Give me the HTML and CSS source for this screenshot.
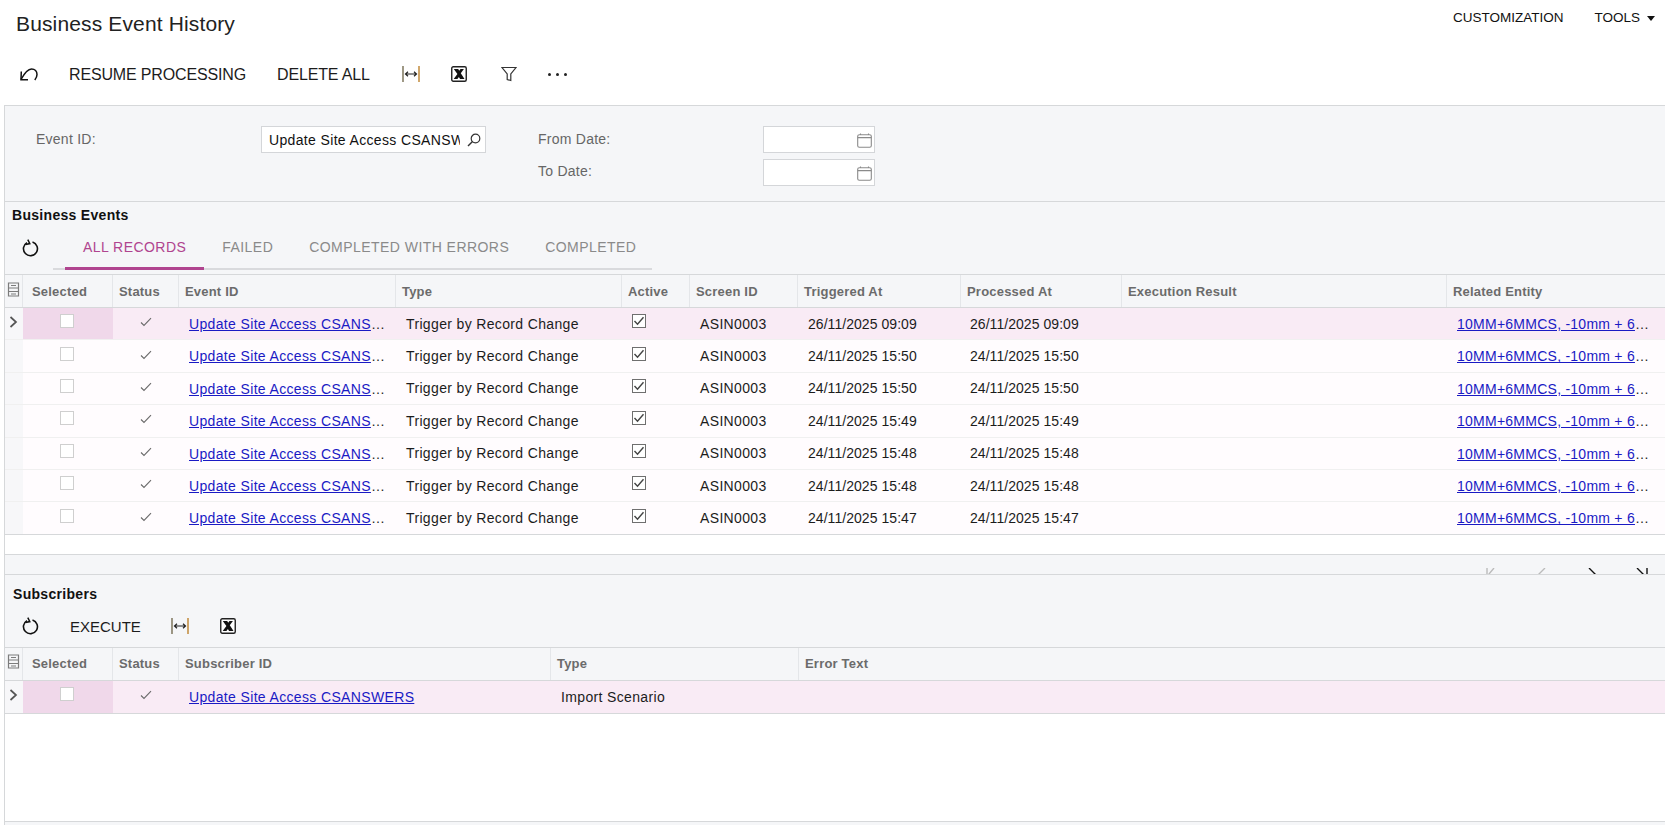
FILE: index.html
```html
<!DOCTYPE html>
<html lang="en">
<head>
<meta charset="utf-8">
<title>Business Event History</title>
<link rel="stylesheet" href="styles.css">
</head>
<body>
<svg class="defs" width="0" height="0" aria-hidden="true">
  <symbol id="i-autosize" viewBox="0 0 18 18">
    <path d="M1 1v16" stroke="#6b6244" stroke-width="1.300" fill="none"/>
    <path d="M17 1v16" stroke="#b9791c" stroke-width="1.300" fill="none"/>
    <path d="M3.500 9h11M6 6.800 3.500 9 6 11.200M12 6.800 14.500 9 12 11.200" stroke="#222" stroke-width="1.200" fill="none"/>
  </symbol>
  <symbol id="i-excel" viewBox="0 0 16 16">
    <rect x=".75" y=".75" width="14.500" height="14.500" rx="1.500" fill="#fff" stroke="#222" stroke-width="1.400"/>
    <path d="M2.800 3h4.400l1 1.800L9.500 3h3.400L9.800 7.300l3.700 5.700H9.100L7.900 10.900 6.400 13H2.700l3.700-5z" fill="#111"/>
  </symbol>
  <symbol id="i-refresh" viewBox="0 0 18 18">
    <path d="M6 3.600A7 7 0 1 0 11.500 3" stroke="#111" stroke-width="1.600" fill="none"/>
    <path d="M6.800 .6 8.800 4.600 4.500 5.500" stroke="#111" stroke-width="1.500" fill="none"/>
  </symbol>
  <symbol id="i-cal" viewBox="0 0 15 15">
    <rect x=".7" y="1.700" width="13.600" height="12.600" rx="1.600" fill="none" stroke="#8a8a8a" stroke-width="1.100"/>
    <path d="M.7 4.600h13.600M3.500.5v1.500M11.500.5v1.500" stroke="#8a8a8a" stroke-width="1.100" fill="none"/>
  </symbol>
  <symbol id="i-check" viewBox="0 0 12 10">
    <path d="M1 5.500 4 8.500 11 1.200" stroke="#6b6b6b" stroke-width="1.100" fill="none"/>
  </symbol>
  <symbol id="i-tick" viewBox="0 0 12 10">
    <path d="M1.500 5 4.500 8.200 10.500 1.200" stroke="#444" stroke-width="1.400" fill="none"/>
  </symbol>
  <symbol id="i-gridcfg" viewBox="0 0 13 15">
    <path d="M1.500 1h10v13h-10zM1.500 6h10M1.500 9.500h10M4 3.500h5M4 12h5" stroke="#7c7c7c" stroke-width="1.200" fill="none"/>
  </symbol>
  <symbol id="i-chev" viewBox="0 0 9 12">
    <path d="M1.500 1 7 6 1.500 11" stroke="#555" stroke-width="1.700" fill="none"/>
  </symbol>
</svg>

<header class="titlebar">
  <h1 class="title">Business Event History</h1>
  <nav class="topnav">
    <span>CUSTOMIZATION</span>
    <span class="tools">TOOLS<i class="caret"></i></span>
  </nav>
</header>

<div class="toolbar main-toolbar">
  <svg class="ic-undo" width="18" height="13" viewBox="0 0 18 13"><path d="M1 11.500 C4 6 7 1 11.500 1 C15 1 17 3.500 17 6.500 C17 8.500 16 10.500 14.800 12" stroke="#111" stroke-width="1.500" fill="none"/><path d="M1.300 3.500 1 11.800 8 11.800" stroke="#111" stroke-width="1.500" fill="none"/></svg>
  <span class="tb-label resume">RESUME PROCESSING</span>
  <span class="tb-label delete">DELETE ALL</span>
  <svg class="ic-auto" width="18" height="18"><use href="#i-autosize"/></svg>
  <svg class="ic-excel" width="16" height="16"><use href="#i-excel"/></svg>
  <svg class="ic-filter" width="16" height="16" viewBox="0 0 16 16"><path d="M1 1.500h14L9.800 8v6.500l-3.600-1V8z" stroke="#333" stroke-width="1.200" fill="#fff"/></svg>
  <span class="dots"><i></i><i></i><i></i></span>
</div>

<main class="panel">
  <section class="form">
    <div class="form-col first">
      <label class="f-label">Event ID:</label>
      <div class="input wide"><span class="input-text">Update Site Access CSANSWERS</span>
        <svg class="ic-search" width="14" height="14" viewBox="0 0 14 14"><circle cx="8.500" cy="5.500" r="4.300" fill="none" stroke="#333" stroke-width="1.200"/><path d="M5.500 8.500 1 13" stroke="#333" stroke-width="1.500"/></svg>
      </div>
    </div>
    <div class="form-col second">
      <div class="f-row"><label class="f-label small">From Date:</label><div class="input date"><svg width="15" height="15"><use href="#i-cal"/></svg></div></div>
      <div class="f-row"><label class="f-label small">To Date:</label><div class="input date"><svg width="15" height="15"><use href="#i-cal"/></svg></div></div>
    </div>
  </section>

  <section class="events">
    <h2 class="sec-title">Business Events</h2>
    <div class="tabs-bar">
      <svg class="ic-refresh" width="18" height="18"><use href="#i-refresh"/></svg>
      <div class="tabs">
        <span class="tab active">ALL RECORDS</span>
        <span class="tab">FAILED</span>
        <span class="tab">COMPLETED WITH ERRORS</span>
        <span class="tab">COMPLETED</span>
      </div>
    </div>
    <div class="grid ev">
      <div class="row head">
        <div class="c sel"><svg width="13" height="15"><use href="#i-gridcfg"/></svg></div><div class="c">Selected</div><div class="c">Status</div><div class="c">Event ID</div><div class="c">Type</div><div class="c">Active</div><div class="c">Screen ID</div><div class="c">Triggered At</div><div class="c">Processed At</div><div class="c">Execution Result</div><div class="c">Related Entity</div>
      </div>
      <div class="row body current">
        <div class="c sel"><svg width="9" height="12"><use href="#i-chev"/></svg></div><div class="c box hl"><i class="cb"></i></div><div class="c ctr"><svg width="12" height="10"><use href="#i-check"/></svg></div><div class="c t link"><a href="#">Update Site Access CSANSWERS</a></div><div class="c t">Trigger by Record Change</div><div class="c active-cell"><i class="cb on"><svg width="12" height="10"><use href="#i-tick"/></svg></i></div><div class="c t">ASIN0003</div><div class="c t d">26/11/2025 09:09</div><div class="c t d">26/11/2025 09:09</div><div class="c t"></div><div class="c t link rel"><a href="#">10MM+6MMCS, -10mm + 6mm Cold Store</a></div>
      </div>
      <div class="row body">
        <div class="c sel"></div><div class="c box"><i class="cb"></i></div><div class="c ctr"><svg width="12" height="10"><use href="#i-check"/></svg></div><div class="c t link"><a href="#">Update Site Access CSANSWERS</a></div><div class="c t">Trigger by Record Change</div><div class="c active-cell"><i class="cb on"><svg width="12" height="10"><use href="#i-tick"/></svg></i></div><div class="c t">ASIN0003</div><div class="c t d">24/11/2025 15:50</div><div class="c t d">24/11/2025 15:50</div><div class="c t"></div><div class="c t link rel"><a href="#">10MM+6MMCS, -10mm + 6mm Cold Store</a></div>
      </div>
      <div class="row body">
        <div class="c sel"></div><div class="c box"><i class="cb"></i></div><div class="c ctr"><svg width="12" height="10"><use href="#i-check"/></svg></div><div class="c t link"><a href="#">Update Site Access CSANSWERS</a></div><div class="c t">Trigger by Record Change</div><div class="c active-cell"><i class="cb on"><svg width="12" height="10"><use href="#i-tick"/></svg></i></div><div class="c t">ASIN0003</div><div class="c t d">24/11/2025 15:50</div><div class="c t d">24/11/2025 15:50</div><div class="c t"></div><div class="c t link rel"><a href="#">10MM+6MMCS, -10mm + 6mm Cold Store</a></div>
      </div>
      <div class="row body">
        <div class="c sel"></div><div class="c box"><i class="cb"></i></div><div class="c ctr"><svg width="12" height="10"><use href="#i-check"/></svg></div><div class="c t link"><a href="#">Update Site Access CSANSWERS</a></div><div class="c t">Trigger by Record Change</div><div class="c active-cell"><i class="cb on"><svg width="12" height="10"><use href="#i-tick"/></svg></i></div><div class="c t">ASIN0003</div><div class="c t d">24/11/2025 15:49</div><div class="c t d">24/11/2025 15:49</div><div class="c t"></div><div class="c t link rel"><a href="#">10MM+6MMCS, -10mm + 6mm Cold Store</a></div>
      </div>
      <div class="row body">
        <div class="c sel"></div><div class="c box"><i class="cb"></i></div><div class="c ctr"><svg width="12" height="10"><use href="#i-check"/></svg></div><div class="c t link"><a href="#">Update Site Access CSANSWERS</a></div><div class="c t">Trigger by Record Change</div><div class="c active-cell"><i class="cb on"><svg width="12" height="10"><use href="#i-tick"/></svg></i></div><div class="c t">ASIN0003</div><div class="c t d">24/11/2025 15:48</div><div class="c t d">24/11/2025 15:48</div><div class="c t"></div><div class="c t link rel"><a href="#">10MM+6MMCS, -10mm + 6mm Cold Store</a></div>
      </div>
      <div class="row body">
        <div class="c sel"></div><div class="c box"><i class="cb"></i></div><div class="c ctr"><svg width="12" height="10"><use href="#i-check"/></svg></div><div class="c t link"><a href="#">Update Site Access CSANSWERS</a></div><div class="c t">Trigger by Record Change</div><div class="c active-cell"><i class="cb on"><svg width="12" height="10"><use href="#i-tick"/></svg></i></div><div class="c t">ASIN0003</div><div class="c t d">24/11/2025 15:48</div><div class="c t d">24/11/2025 15:48</div><div class="c t"></div><div class="c t link rel"><a href="#">10MM+6MMCS, -10mm + 6mm Cold Store</a></div>
      </div>
      <div class="row body last">
        <div class="c sel"></div><div class="c box"><i class="cb"></i></div><div class="c ctr"><svg width="12" height="10"><use href="#i-check"/></svg></div><div class="c t link"><a href="#">Update Site Access CSANSWERS</a></div><div class="c t">Trigger by Record Change</div><div class="c active-cell"><i class="cb on"><svg width="12" height="10"><use href="#i-tick"/></svg></i></div><div class="c t">ASIN0003</div><div class="c t d">24/11/2025 15:47</div><div class="c t d">24/11/2025 15:47</div><div class="c t"></div><div class="c t link rel"><a href="#">10MM+6MMCS, -10mm + 6mm Cold Store</a></div>
      </div>
    </div>
    <div class="grid-spacer"></div>
    <div class="pager">
      <svg class="pg first" width="12" height="12" viewBox="0 0 12 12"><path d="M1 0v12M8 0 3 6l5 6" stroke="#bbb" stroke-width="1.400" fill="none"/></svg>
      <svg class="pg prev" width="8" height="12" viewBox="0 0 8 12"><path d="M7 0 1 6l6 6" stroke="#bbb" stroke-width="1.400" fill="none"/></svg>
      <svg class="pg next" width="8" height="12" viewBox="0 0 8 12"><path d="M1 0l6 6-6 6" stroke="#111" stroke-width="1.400" fill="none"/></svg>
      <svg class="pg end" width="12" height="12" viewBox="0 0 12 12"><path d="M11 0v12M1 0l6 6-6 6" stroke="#111" stroke-width="1.400" fill="none"/></svg>
    </div>
  </section>

  <section class="subs">
    <h2 class="sec-title">Subscribers</h2>
    <div class="toolbar sub-toolbar">
      <svg class="ic-refresh" width="18" height="18"><use href="#i-refresh"/></svg>
      <span class="tb-label execute">EXECUTE</span>
      <svg class="ic-auto2" width="18" height="18"><use href="#i-autosize"/></svg>
      <svg class="ic-excel2" width="16" height="16"><use href="#i-excel"/></svg>
    </div>
    <div class="grid sb">
      <div class="row head">
        <div class="c sel"><svg width="13" height="15"><use href="#i-gridcfg"/></svg></div><div class="c">Selected</div><div class="c">Status</div><div class="c">Subscriber ID</div><div class="c">Type</div><div class="c">Error Text</div>
      </div>
      <div class="row body current last">
        <div class="c sel"><svg width="9" height="12"><use href="#i-chev"/></svg></div><div class="c box hl"><i class="cb"></i></div><div class="c ctr"><svg width="12" height="10"><use href="#i-check"/></svg></div><div class="c t link"><a href="#">Update Site Access CSANSWERS</a></div><div class="c t">Import Scenario</div><div class="c t"></div>
      </div>
    </div>
    <div class="sub-empty"></div>
  </section>
  <div class="foot"></div>
</main>
</body>
</html>
```
FILE: styles.css
```css
* { box-sizing: border-box; }
html, body { margin: 0; padding: 0; height: 825px; overflow: hidden; background: #fff; }
body { font-family: "Liberation Sans", Arial, sans-serif; color: #1c1c1c; font-size: 14px; }
.defs { position: absolute; }

.titlebar { height: 48px; display: flex; justify-content: space-between; align-items: flex-start; }
.title { margin: 11px 0 0 16px; font-size: 21px; letter-spacing: .14px; line-height: 26px; font-weight: 400; color: #222; }
.topnav { display: flex; gap: 31px; padding: 10px 10px 0 0; font-size: 13.500px; line-height: 16px; color: #111; }
.tools { display: flex; align-items: center; }
.caret { margin-left: 7px; width: 0; height: 0; border-left: 4.500px solid transparent; border-right: 4.500px solid transparent; border-top: 5px solid #111; }

.toolbar { display: flex; align-items: center; }
.main-toolbar { height: 57px; padding: 0 0 5px 20px; }
.tb-label { margin-top: 2px; font-size: 16px; letter-spacing: -.15px; line-height: 20px; color: #1c1c1c; white-space: nowrap; }
.resume { margin-left: 31px; }
.delete { margin-left: 31px; }
.ic-auto { margin-left: 32px; }
.ic-excel { margin-left: 31px; }
.ic-filter { margin-left: 34px; }
.dots { margin-left: 31px; display: flex; gap: 5px; }
.dots i { width: 3px; height: 3px; border-radius: 50%; background: #222; }

.panel { margin-left: 4px; height: 720px; border-top: 1px solid #d6d8da; border-left: 1px solid #d6d8da; background: #f5f6f8; display: flex; flex-direction: column; }

.form { height: 96px; border-bottom: 1px solid #d6d8da; display: flex; padding-top: 20px; flex: none; }
.form-col.first { display: flex; align-items: flex-start; width: 533px; padding-left: 31px; }
.f-label { color: #666; font-size: 14px; letter-spacing: .25px; line-height: 27px; }
.first .f-label { width: 225px; }
.small { width: 225px; }
.f-row { display: flex; height: 33px; }
.f-row + .f-row .f-label { line-height: 25px; }
.input { background: #fff; border: 1px solid #d4d6d9; height: 27px; display: flex; align-items: center; }
.wide { width: 225px; padding: 0 4px 0 7px; justify-content: space-between; }
.input-text { width: 191px; overflow: hidden; white-space: nowrap; color: #111; font-size: 14px; letter-spacing: .35px; }
.ic-search { flex: none; }
.date { width: 112px; justify-content: flex-end; padding-right: 2px; }
.date svg { margin-top: 2px; }

.sec-title { margin: 0; font-size: 14px; font-weight: 700; letter-spacing: .3px; color: #111; line-height: 18px; }
.events { flex: none; }
.events .sec-title { padding: 4px 0 0 7px; height: 24px; }

.tabs-bar { height: 45px; display: flex; }
.tabs-bar .ic-refresh { margin: 13px 0 0 16px; flex: none; }
.tabs { margin-left: 14px; height: 44px; width: 599px; border-bottom: 2px solid #d9dadd; display: flex; padding-left: 12px; }
.tab { height: 44px; padding: 12px 18px 0 18px; font-size: 14px; letter-spacing: .45px; line-height: 18px; color: #8a8a8a; white-space: nowrap; }
.tab.active { color: #b0448f; border-bottom: 3px solid #b0448f; }

.grid { background: #fff; border-top: 1px solid #d6d8da; margin-top: 3px; }
.row { display: grid; }
.ev .row { grid-template-columns: 18px 90px 66px 217px 226px 68px 108px 163px 161px 325px 1fr; }
.sb .row { grid-template-columns: 18px 90px 66px 372px 248px 1fr; }
.head { height: 33px; background: #f5f6f8; border-bottom: 1px solid #d6d8da; }
.head .c { padding: 0 6px; font-size: 13px; letter-spacing: .2px; font-weight: 700; color: #6b6b6b; display: flex; align-items: center; border-right: 1px solid #e4e6e9; white-space: nowrap; }
.head .c:first-child { padding: 0 0 4px 2px; }
.head .c:nth-child(2) { padding-left: 9px; }
.head .c:last-child { border-right: 0; }

.body { height: 32.400px; background: #fffcfe; border-bottom: 1px solid #f0f0f0; }
.body.current { background: #f9ebf5; }
.body.last { border-bottom: 1px solid #d6d8da; }
.body .c { min-width: 0; display: flex; align-items: center; }
.body .sel { background: #f7f7f9; padding: 0 0 3px 4px; }
.hl { background: #f0d8ea; }
.box { justify-content: center; padding: 0 2px 5px 0; }
.ctr { justify-content: center; padding: 0 0 3px 0; }
.active-cell { padding: 0 0 5px 10px; }
.cb { width: 14px; height: 14px; border: 1px solid #cfcfcf; background: #fff; display: flex; align-items: center; justify-content: center; }
.cb.on { border-color: #6f6f6f; }
.t { padding: 0 10px; font-size: 14px; letter-spacing: .35px; color: #1c1c1c; white-space: nowrap; }
.t.d { letter-spacing: .05px; }
.t.d + .t.d { padding-left: 9px; }
.t.link { display: block; overflow: hidden; text-overflow: ellipsis; line-height: 32px; }
.link a { color: #1a1ac4; text-decoration: underline; }
.t.rel { padding-right: 8px; letter-spacing: .25px; }

.grid-spacer { height: 20px; background: #fff; border-bottom: 1px solid #d6d8da; }
.pager { height: 20px; overflow: hidden; display: flex; padding-top: 13px; padding-left: 1481px; border-bottom: 1px solid #d6d8da; }
.pg { flex: none; }
.pg.prev { margin-left: 40px; }
.pg.next { margin-left: 42px; }
.pg.end { margin-left: 40px; }

.subs { flex: none; }
.subs .sec-title { padding: 10px 0 0 8px; height: 30px; }
.sub-toolbar { height: 42px; padding: 0 0 0 16px; }
.execute { margin-left: 31px; font-size: 15px; letter-spacing: 0; }
.ic-auto2 { margin-left: 30px; }
.ic-excel2 { margin-left: 31px; }
.sub-toolbar + .grid { margin-top: 0; }
.sb .body { height: 33px; }
.sub-empty { height: 108px; background: #fff; border-bottom: 1px solid #d6d8da; }
.foot { flex: 1; background: #f5f6f8; }
```
